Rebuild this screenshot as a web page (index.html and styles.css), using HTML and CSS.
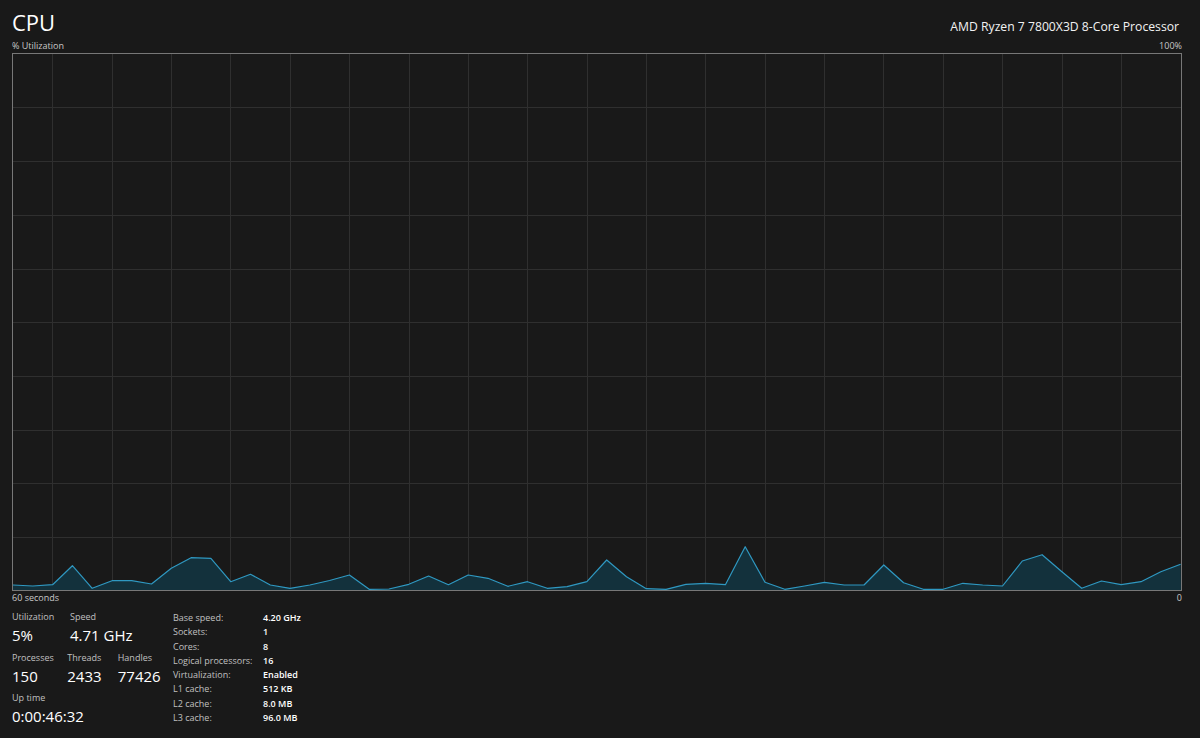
FILE: index.html
```html
<!DOCTYPE html>
<html lang="en">

<head>
    <meta charset="UTF-8">
    <meta name="viewport" content="width=device-width, initial-scale=1.0">
    <title>CPU</title>
    <link rel="stylesheet" href="styles.css">
</head>

<body>
    <div class="page">
        <header class="title-bar">
            <h1 class="title">CPU</h1>
            <div class="model">AMD Ryzen 7 7800X3D 8-Core Processor</div>
        </header>

        <div class="axis axis-top">
            <span>% Utilization</span>
            <span>100%</span>
        </div>

        <div class="graph">
            <svg viewBox="0 0 1168 536" preserveAspectRatio="none">
                <!-- grid: 10 rows, columns every 3 samples -->
                <path class="grid" d="M0 53.5H1168M0 107.5H1168M0 161.5H1168M0 215.5H1168M0 268.5H1168M0 322.5H1168M0 376.5H1168M0 429.5H1168M0 483.5H1168
                    M39.5 0V536M99.5 0V536M158.5 0V536M217.5 0V536M277.5 0V536M336.5 0V536M396.5 0V536M455.5 0V536M514.5 0V536M574.5 0V536
                    M633.5 0V536M692.5 0V536M752.5 0V536M811.5 0V536M870.5 0V536M930.5 0V536M989.5 0V536M1049.5 0V536M1108.5 0V536" />
                <polygon class="area" points="0,536 0,531 19.8,532 39.6,530.7 59.4,511.7 79.2,534.3 99,526.7 118.7,526.7 138.5,530 158.3,514.3 178.1,503.7 197.9,504.3 217.7,527.7 237.5,520.3 257.3,531 277.1,534.3 296.9,531 316.6,526.5 336.4,521 356.2,535.3 376,535 395.8,530.3 415.6,522 435.4,530.7 455.2,521 475,524.3 494.8,532.3 514.5,527.7 534.3,534.3 554.1,532.7 573.9,527.7 593.7,506 613.5,522.7 633.3,534.7 653.1,535.3 672.9,530.3 692.7,529.3 712.4,530.7 732.2,492.7 752,528.3 771.8,535.3 791.6,532 811.4,528.3 831.2,531 851,531 870.8,511 890.6,528.7 910.3,535.3 930.1,535.3 949.9,529.3 969.7,531 989.5,532 1009.3,507 1029.1,500.7 1048.9,517.7 1068.7,534.3 1088.5,527 1108.2,530.7 1128,527.7 1147.8,517.7 1167.6,510.3 1168,536" />
                <polyline class="line" points="0,531 19.8,532 39.6,530.7 59.4,511.7 79.2,534.3 99,526.7 118.7,526.7 138.5,530 158.3,514.3 178.1,503.7 197.9,504.3 217.7,527.7 237.5,520.3 257.3,531 277.1,534.3 296.9,531 316.6,526.5 336.4,521 356.2,535.3 376,535 395.8,530.3 415.6,522 435.4,530.7 455.2,521 475,524.3 494.8,532.3 514.5,527.7 534.3,534.3 554.1,532.7 573.9,527.7 593.7,506 613.5,522.7 633.3,534.7 653.1,535.3 672.9,530.3 692.7,529.3 712.4,530.7 732.2,492.7 752,528.3 771.8,535.3 791.6,532 811.4,528.3 831.2,531 851,531 870.8,511 890.6,528.7 910.3,535.3 930.1,535.3 949.9,529.3 969.7,531 989.5,532 1009.3,507 1029.1,500.7 1048.9,517.7 1068.7,534.3 1088.5,527 1108.2,530.7 1128,527.7 1147.8,517.7 1167.6,510.3" />
            </svg>
        </div>

        <div class="axis axis-bottom">
            <span>60 seconds</span>
            <span>0</span>
        </div>

        <section class="stats">
            <div class="live">
                <div class="live-row">
                    <div class="stat">
                        <div class="stat-label">Utilization</div>
                        <div class="stat-value">5%</div>
                    </div>
                    <div class="stat">
                        <div class="stat-label">Speed</div>
                        <div class="stat-value">4.71 GHz</div>
                    </div>
                </div>
                <div class="live-row">
                    <div class="stat">
                        <div class="stat-label">Processes</div>
                        <div class="stat-value">150</div>
                    </div>
                    <div class="stat stat-narrow">
                        <div class="stat-label">Threads</div>
                        <div class="stat-value">2433</div>
                    </div>
                    <div class="stat">
                        <div class="stat-label">Handles</div>
                        <div class="stat-value">77426</div>
                    </div>
                </div>
                <div class="live-row">
                    <div class="stat">
                        <div class="stat-label">Up time</div>
                        <div class="stat-value">0:00:46:32</div>
                    </div>
                </div>
            </div>

            <dl class="specs">
                <dt>Base speed:</dt>
                <dd>4.20 GHz</dd>
                <dt>Sockets:</dt>
                <dd>1</dd>
                <dt>Cores:</dt>
                <dd>8</dd>
                <dt>Logical processors:</dt>
                <dd>16</dd>
                <dt>Virtualization:</dt>
                <dd>Enabled</dd>
                <dt>L1 cache:</dt>
                <dd>512 KB</dd>
                <dt>L2 cache:</dt>
                <dd>8.0 MB</dd>
                <dt>L3 cache:</dt>
                <dd>96.0 MB</dd>
            </dl>
        </section>
    </div>
</body>

</html>
```

FILE: styles.css
```css
body {
    margin: 0;
    background-color: #191919;
    color: #ffffff;
    font-family: "Open Sans", "Noto Sans", sans-serif;
}

.page {
    padding: 0 18px 0 12px;
}

.title-bar {
    display: flex;
    justify-content: space-between;
    align-items: baseline;
    height: 39px;
    padding-top: 7px;
    box-sizing: border-box;
}

.title {
    margin: 0;
    font-size: 22px;
    font-weight: 400;
    line-height: 30px;
}

.model {
    font-size: 12.2px;
    padding-right: 3px;
    color: #f2f2f2;
}

.axis {
    display: flex;
    justify-content: space-between;
    font-size: 9px;
    line-height: 14px;
    color: #c8c8c8;
}

.graph {
    height: 538px;
    border: 1px solid #777777;
    box-sizing: border-box;
}

.graph svg {
    display: block;
    width: 100%;
    height: 100%;
}

.grid {
    fill: none;
    stroke: #2f2f2f;
    stroke-width: 1;
    shape-rendering: crispEdges;
}

.area {
    fill: #13313c;
}

.line {
    fill: none;
    stroke: #2f98c1;
    stroke-width: 1.2;
    stroke-linejoin: round;
}

.stats {
    display: flex;
    margin-top: 5px;
}

.live {
    width: 161px;
}

.live-row {
    display: flex;
    margin-bottom: 4.5px;
}

.stat {
    width: 58px;
}

.stat-narrow {
    width: 53px;
}

.stat-label {
    font-size: 9px;
    line-height: 14px;
    color: #c0c0c0;
}

.stat-value {
    font-size: 15px;
    line-height: 22px;
    white-space: nowrap;
}

.specs {
    display: grid;
    grid-template-columns: 90px auto;
    grid-auto-rows: 14.3px;
    margin: 1px 0 0;
    font-size: 9px;
}

.specs dt,
.specs dd {
    line-height: 14.3px;
    height: 14.3px;
}

.specs dt {
    color: #c0c0c0;
}

.specs dd {
    margin: 0;
    font-weight: 600;
}
```
